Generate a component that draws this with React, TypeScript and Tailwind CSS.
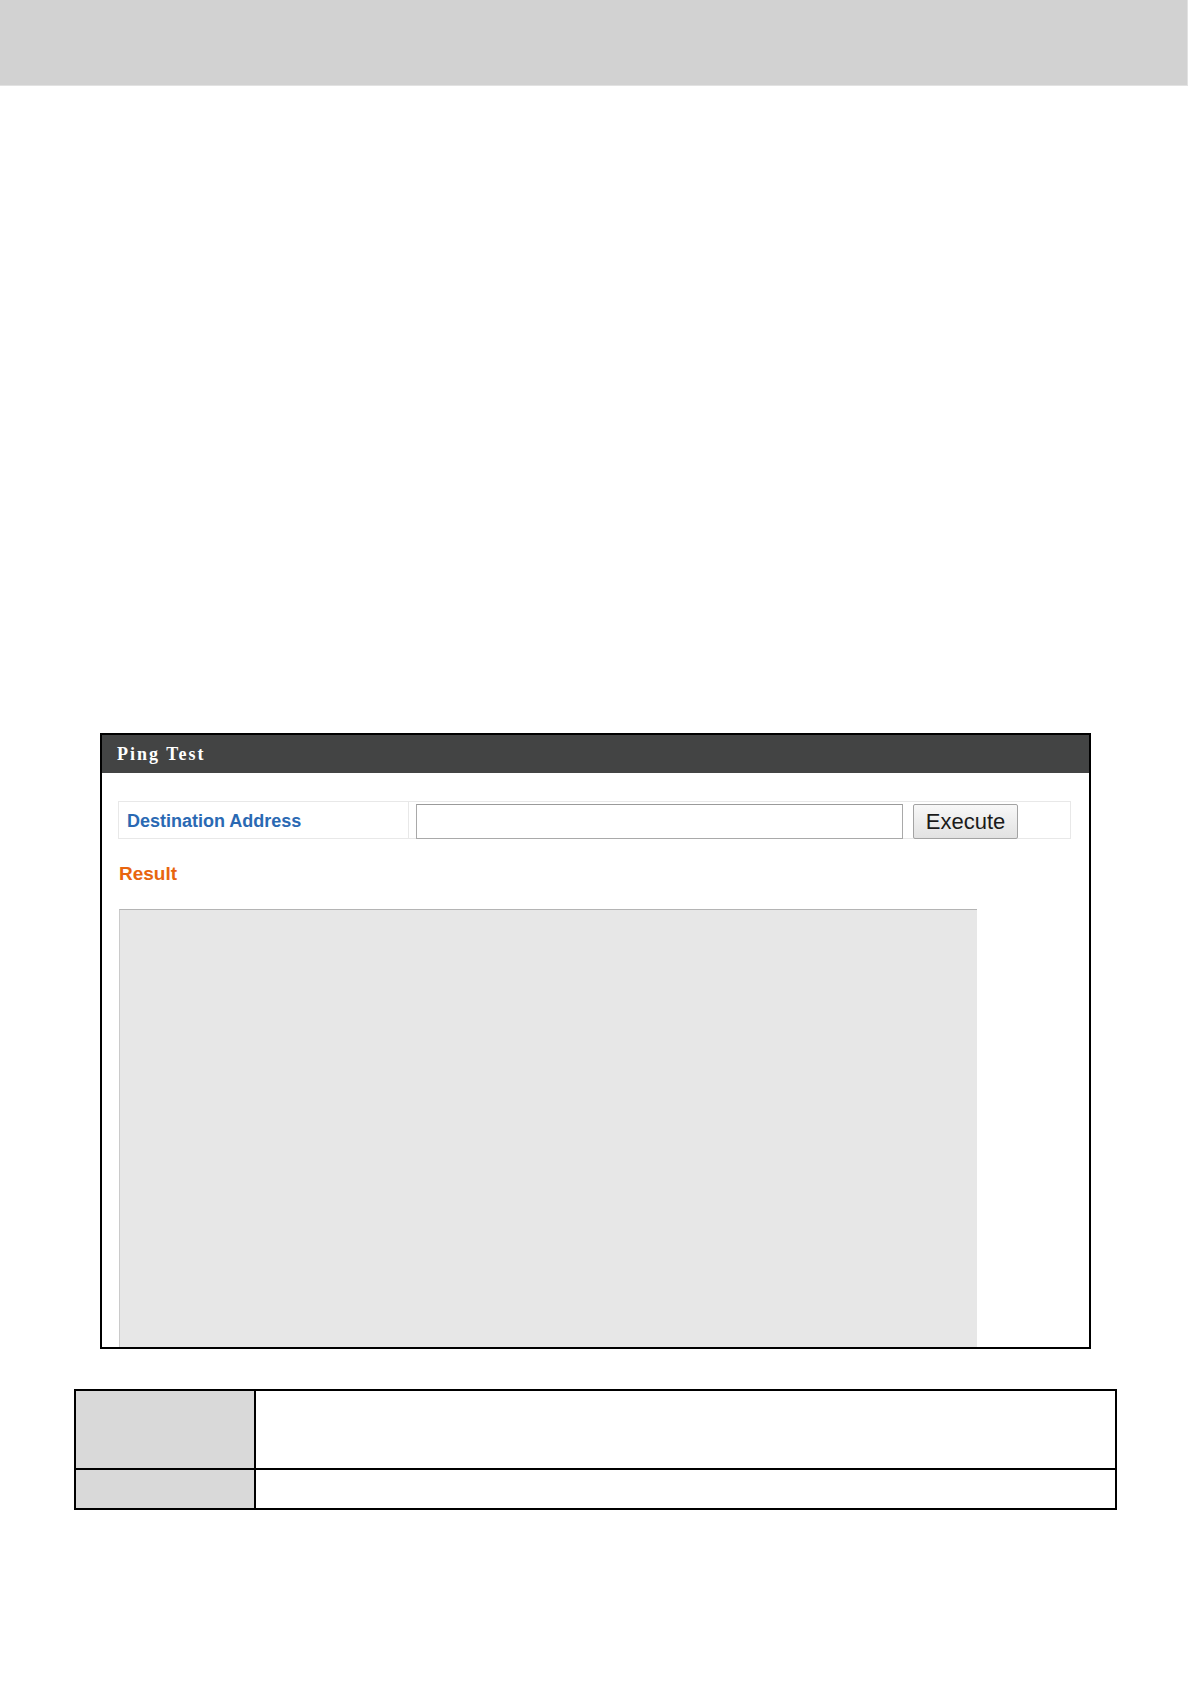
import React from 'react';

// Ping Test page: screenshot of a router's diagnostics panel with an empty legend table below

const App: React.FC = () => {
  return (
    <div className="w-[1191px] h-[1684px] bg-white font-['Liberation_Sans',Arial,sans-serif]">
      {/* top page band */}
      <div className="w-[1188px] h-[86px] bg-[#d2d2d2] border-b border-r border-[#e2e2e2]" />

      {/* panel */}
      <div className="ml-[100px] mt-[647px] w-[991px] h-[616px] border-2 border-black overflow-hidden">
        <div className="h-[38px] bg-[#434444] flex items-center pl-[15px]">
          <span className="text-white font-['Liberation_Serif',serif] font-bold text-[18px] tracking-[2px]">
            Ping Test
          </span>
        </div>

        <div className="pl-[16px] pr-[18px] pt-[28px]">
          <div className="flex h-[38px] border border-[#e8e8e8]">
            <div className="w-[290px] border-r border-[#e8e8e8] flex items-center pl-[8px] pt-[3px]">
              <span className="text-[#2a69b3] font-bold text-[18px]">Destination Address</span>
            </div>
            <div className="flex-1 flex items-stretch pl-[7px] pt-[2px]">
              <input
                type="text"
                className="w-[487px] h-[35px] border border-[#a9a9a9] border-t-[#9a9a9a] bg-white outline-none"
              />
              <button
                type="button"
                className="ml-[10px] w-[105px] h-[35px] border border-[#a3a3a3] rounded-[2px] bg-gradient-to-b from-[#f8f8f8] to-[#e2e2e2] text-[#1a1a1a] text-[22px] leading-none"
              >
                Execute
              </button>
            </div>
          </div>

          <div className="mt-[24px] h-[22px] flex items-center pl-[1px]">
            <span className="text-[#e8650f] font-bold text-[19px]">Result</span>
          </div>

          <div className="mt-[24px] ml-[1px] w-[858px] h-[600px] bg-[#e7e7e7] border-t border-l border-t-[#b4b4b4] border-l-[#cacaca]" />
        </div>
      </div>

      {/* legend table */}
      <div className="ml-[74px] mt-[40px] w-[1043px] border-2 border-black">
        <div className="flex h-[79px] border-b-2 border-black">
          <div className="w-[180px] bg-[#d9d9d9] border-r-2 border-black" />
          <div className="flex-1" />
        </div>
        <div className="flex h-[38px]">
          <div className="w-[180px] bg-[#d9d9d9] border-r-2 border-black" />
          <div className="flex-1" />
        </div>
      </div>
    </div>
  );
};

export default App;
